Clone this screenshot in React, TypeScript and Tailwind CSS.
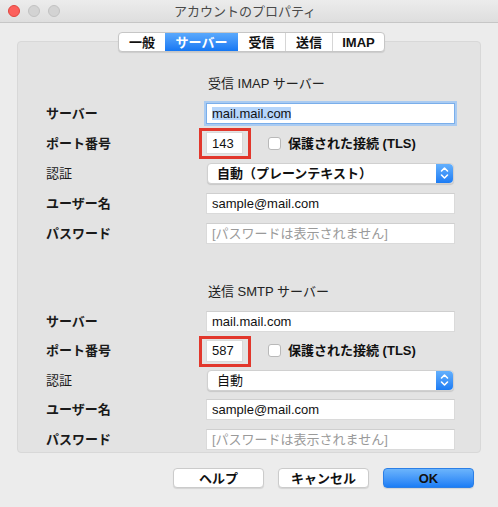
import type { ReactNode } from 'react'

const font = "font-['Liberation_Sans','Noto_Sans_CJK_JP',sans-serif]"

const tabs = [
  { label: '一般', w: 'w-[46px]' },
  { label: 'サーバー', w: 'w-[73px]', active: true },
  { label: '受信', w: 'w-[47px]' },
  { label: '送信', w: 'w-[47px]' },
  { label: 'IMAP', w: 'w-[52px]' },
]

function Row({ label, bold = true, h, children }: { label: string; bold?: boolean; h: string; children: ReactNode }) {
  return (
    <div className={`flex items-center ${h}`}>
      <div className={`w-[160px] shrink-0 text-[#1a1a1a] ${bold ? 'font-bold' : ''}`}>{label}</div>
      <div className="flex items-center">{children}</div>
    </div>
  )
}

function TextField({ children, muted = false }: { children: ReactNode; muted?: boolean }) {
  return (
    <div
      className={`w-[249px] h-[21px] flex items-center pl-[5px] bg-white border border-[#dadada] border-t-[#cfcfcf] ${
        muted ? 'text-[#9a9a9a]' : 'text-[#111]'
      }`}
    >
      {children}
    </div>
  )
}

function PortField({ value }: { value: string }) {
  return (
    <div className="flex items-center">
      <div className="relative w-[37px] h-[22px] flex items-center pl-[5px] bg-white border border-[#dadada]">
        {value}
        {/* red annotation frame */}
        <div className="absolute -left-[8px] -top-[5px] w-[52px] h-[31px] border-[3px] border-[#e2372c]" />
      </div>
      <div className="ml-[25px] w-[13px] h-[13px] rounded-[3px] bg-white border border-[#b9b9b9]" />
      <span className="ml-[7px] font-bold">保護された接続 (TLS)</span>
    </div>
  )
}

function Stepper() {
  return (
    <div className="w-[17px] h-full rounded-r-[4px] bg-gradient-to-b from-[#63b0fd] to-[#1b7cf4] flex items-center justify-center">
      <svg width="9" height="14" viewBox="0 0 9 14" fill="none" stroke="white" strokeWidth="1.6" strokeLinecap="round" strokeLinejoin="round">
        <path d="M1.5 5 L4.5 2 L7.5 5" />
        <path d="M1.5 9 L4.5 12 L7.5 9" />
      </svg>
    </div>
  )
}

function Select({ value, bold = false }: { value: string; bold?: boolean }) {
  return (
    <div className="ml-[1px] w-[247px] h-[21px] flex items-center justify-between bg-white rounded-[4px] border border-[#d0d0d0] shadow-[0_1px_1px_rgba(0,0,0,0.12)]">
      <span className={`pl-[9px] ${bold ? 'font-bold' : ''}`}>{value}</span>
      <Stepper />
    </div>
  )
}

function Section({ title, port, auth, authBold, h, focused = false }: {
  title: string
  port: string
  auth: string
  authBold?: boolean
  h: string
  focused?: boolean
}) {
  return (
    <div>
      <div className={`flex items-center pl-[162px] text-[#222] ${h}`}>{title}</div>
      <Row label="サーバー" h={h}>
        {focused ? (
          <div className="w-[249px] h-[21px] flex items-center pl-[5px] bg-white border border-[#7aaeea] ring-[2px] ring-[#a9cbf2]">
            <span className="bg-[#b5d5fb]">mail.mail.com</span>
          </div>
        ) : (
          <TextField>mail.mail.com</TextField>
        )}
      </Row>
      <Row label="ポート番号" h={h}>
        <PortField value={port} />
      </Row>
      <Row label="認証" bold={false} h={h}>
        <Select value={auth} bold={authBold} />
      </Row>
      <Row label="ユーザー名" h={h}>
        <TextField>sample@mail.com</TextField>
      </Row>
      <Row label="パスワード" h={h}>
        <TextField muted>[パスワードは表示されません]</TextField>
      </Row>
    </div>
  )
}

export default function App() {
  return (
    <div className={`w-[498px] h-[507px] bg-[#ececec] text-[13px] leading-none text-[#111] ${font}`}>
      {/* title bar */}
      <div className="h-[23px] flex items-center bg-gradient-to-b from-[#ececec] to-[#dedede] border-b border-[#c6c6c6]">
        <div className="flex gap-[8px] pl-[8px]">
          <div className="w-[12px] h-[12px] rounded-full bg-[#fc605c] border border-[#e0463f]" />
          <div className="w-[12px] h-[12px] rounded-full bg-[#d3d3d3] border border-[#c2c2c2]" />
          <div className="w-[12px] h-[12px] rounded-full bg-[#d3d3d3] border border-[#c2c2c2]" />
        </div>
        <div className="flex-1 text-center text-[#4a4a4a] pr-[68px]">アカウントのプロパティ</div>
      </div>

      <div className="px-[17px] pt-[9px]">
        {/* tabs */}
        <div className="relative z-10 flex justify-center pl-[5px]">
          <div className="flex h-[20px] bg-white rounded-[4px] border border-[#c6c6c6] shadow-[0_1px_1px_rgba(0,0,0,0.1)] overflow-hidden">
            {tabs.map((t, i) => (
              <div
                key={t.label}
                className={`${t.w} flex items-center justify-center font-bold ${
                  t.active
                    ? 'bg-gradient-to-b from-[#5aa9fc] to-[#1477f3] text-white'
                    : 'text-[#111]'
                } ${i > 0 && !t.active && !tabs[i - 1].active ? 'border-l border-[#d6d6d6]' : ''}`}
              >
                {t.label}
              </div>
            ))}
          </div>
        </div>

        {/* group box */}
        <div className="-mt-[11px] h-[412px] bg-[#e3e3e3] border border-[#d8d8d8] rounded-[4px] pl-[28px] pt-[26px]">
          <Section title="受信 IMAP サーバー" port="143" auth="自動（プレーンテキスト）" authBold h="h-[30px]" focused />
          <div className="mt-[29px]">
            <Section title="送信 SMTP サーバー" port="587" auth="自動" h="h-[29.5px]" />
          </div>
        </div>

        {/* buttons */}
        <div className="mt-[15px] flex justify-end gap-[14px] pr-[7px]">
          <button className="w-[91px] h-[20px] bg-white rounded-[4px] border border-[#cbcbcb] shadow-[0_1px_1px_rgba(0,0,0,0.1)] font-bold">
            ヘルプ
          </button>
          <button className="w-[91px] h-[20px] bg-white rounded-[4px] border border-[#cbcbcb] shadow-[0_1px_1px_rgba(0,0,0,0.1)] font-bold">
            キャンセル
          </button>
          <button className="w-[91px] h-[20px] rounded-[4px] border border-[#2c7fe6] bg-gradient-to-b from-[#6bb4fc] to-[#1a7df5] shadow-[0_1px_1px_rgba(0,0,0,0.1)] font-bold text-[#111]">
            OK
          </button>
        </div>
      </div>
    </div>
  )
}
